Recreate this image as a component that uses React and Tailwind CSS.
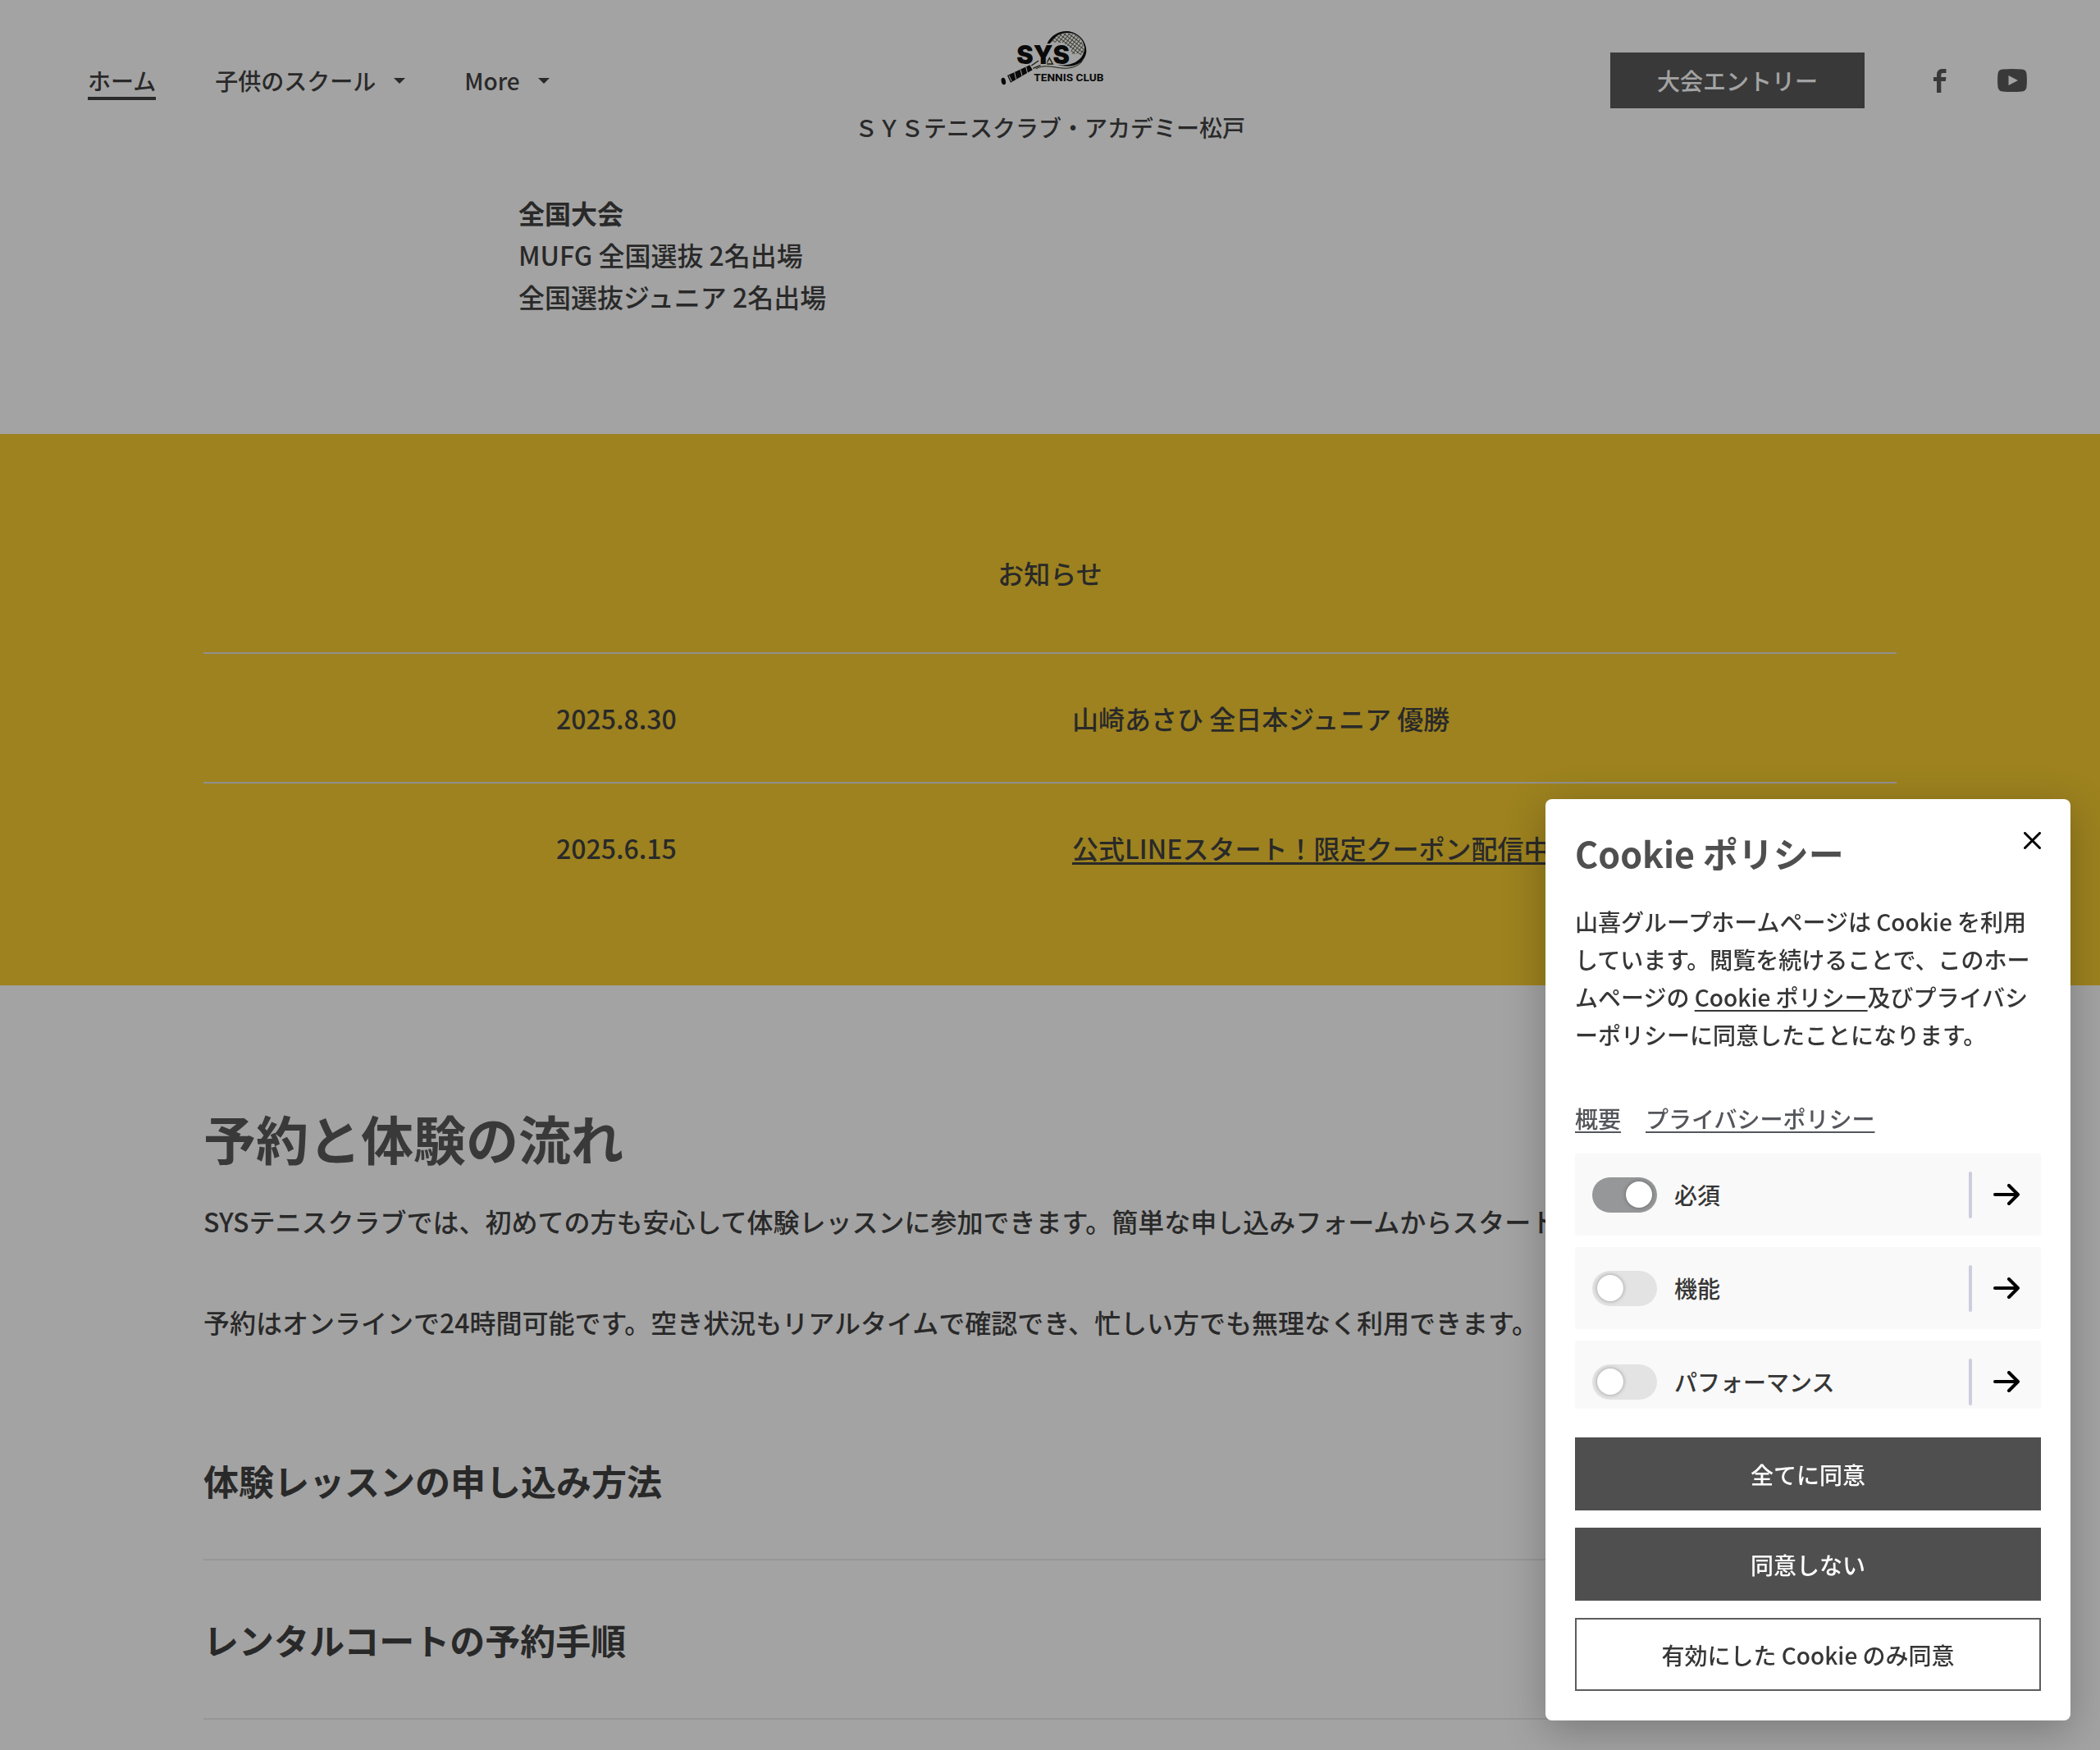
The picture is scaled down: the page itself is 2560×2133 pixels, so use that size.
import React, { useState } from 'react';

const NEWS = [
    { date: '2025.8.30', title: '山崎あさひ 全日本ジュニア 優勝' },
    { date: '2025.6.15', title: '公式LINEスタート！限定クーポン配信中', href: '#line' },
];

const FLOW = ['体験レッスンの申し込み方法', 'レンタルコートの予約手順'];

const COOKIE_TYPES = [
    { id: 'essential', label: '必須' },
    { id: 'functional', label: '機能' },
    { id: 'performance', label: 'パフォーマンス' },
];

const Logo = () => (
    <svg width="160" height="80" viewBox="0 0 480 240" role="img" aria-label="SYS TENNIS CLUB">
        <defs>
            <pattern id="strings" width="11" height="11" patternUnits="userSpaceOnUse" patternTransform="rotate(38)">
                <path d="M0 0H11M0 0V11" stroke="#23240a" strokeWidth="4" fill="none" />
            </pattern>
        </defs>
        <path d="M236 64C254 38 284 28 314 32C346 38 366 62 364 100L356 112L340 106L320 108L316 88L302 76L288 66Z" fill="url(#strings)" />
        <path d="M229 70C244 38 274 22 304 24C346 28 374 62 373 98C370 132 342 152 306 152C290 152 280 150 268 148C290 148 308 148 322 142C350 132 366 110 366 84C362 52 338 32 306 30C278 29 254 44 240 70Z" fill="#000" />
        <path d="M188 162C214 146 246 154 274 158C312 164 342 154 358 134" fill="none" stroke="#1c1d05" strokeWidth="3" />
        <path d="M172 150L198 132M178 160L206 148M226 144L238 122L250 144Z" fill="none" stroke="#1c1d05" strokeWidth="4" />
        <path d="M84 186L166 148L176 166L96 212Z" fill="#000" />
        <path d="M90 186L100 208M110 174L116 200M132 164L138 188M152 154L158 178" stroke="#fff" strokeWidth="3" />
        <ellipse cx="70" cy="207" rx="8" ry="13" fill="#000" transform="rotate(-12 70 207)" />
        <text x="118" y="145" fontSize="92" fontWeight="900" fontFamily="Inter, sans-serif" stroke="#fff" strokeWidth="8" paintOrder="stroke">SYS</text>
        <text x="181" y="207" fontSize="41" fontWeight="700" fontFamily="Roboto, sans-serif">TENNIS CLUB</text>
    </svg>
);

const Caret = () => (
    <svg width="14" height="7" viewBox="0 0 14 7" fill="currentColor" aria-hidden="true">
        <path d="M0 0H14L7 7Z" />
    </svg>
);

const Header = () => (
    <header className="grid grid-cols-[1fr_auto_1fr] items-center px-[107px] text-[28px] leading-[42px]">
        <nav className="flex items-center gap-[72px]">
            <a href="#home" className="border-b-4 border-[#343434] pt-1 leading-[40px]">ホーム</a>
            <button type="button" aria-haspopup="menu" className="flex items-center gap-[22px]">
                子供のスクール
                <Caret />
            </button>
            <button type="button" aria-haspopup="menu" className="flex items-center gap-[22px]">
                More
                <Caret />
            </button>
        </nav>

        <a href="#home" className="flex flex-col items-center gap-[24px] pt-[30px] pb-[20px]">
            <Logo />
            <span>ＳＹＳテニスクラブ・アカデミー松戸</span>
        </a>

        <div className="flex items-center justify-end text-[#4f4f4f]">
            <a href="#entry" className="bg-[#4f4f4f] px-[57px] py-[13px] text-white">大会エントリー</a>
            <a href="#facebook" aria-label="Facebook" className="ml-[84px]">
                <svg width="16" height="29" viewBox="0 0 16 29" fill="currentColor">
                    <path d="M4 29V15H0V10H4V7.500C4 2.500 6.500 0 11 0H15.500V5H12C10 5 9.300 5.800 9.300 7.500V10H15.500L14.800 15H9.300V29Z" />
                </svg>
            </a>
            <a href="#youtube" aria-label="YouTube" className="ml-[62px] -mr-[18px]">
                <svg width="36" height="28" viewBox="0 0 36 28">
                    <path d="M6 .6Q18-.4 30 .6Q35 1 35.500 6Q36.300 14 35.500 22Q35 27 30 27.400Q18 28.400 6 27.400Q1 27 .5 22Q-.3 14 .5 6Q1 1 6 .6Z" fill="currentColor" />
                    <path d="M13.500 8V20L25 14Z" fill="#fff" />
                </svg>
            </a>
        </div>
    </header>
);

const CookieDialog = ({ onClose }) => {
    const [enabled, setEnabled] = useState({ essential: true, functional: false, performance: false });

    const toggle = (id) => {
        if (id === 'essential') return;
        setEnabled({ ...enabled, [id]: !enabled[id] });
    };

    return (
        <section
            role="dialog"
            aria-labelledby="cookie-title"
            className="fixed right-9 bottom-9 w-[640px] rounded-lg bg-white p-9 text-[28px] leading-[46px] text-[#363636] shadow-[0_12px_50px_rgba(0,0,0,0.25)]"
        >
            <div className="flex items-start justify-between">
                <h2 id="cookie-title" className="text-[43px] leading-[58px] font-bold text-[#4f4f4f]">Cookie ポリシー</h2>
                <button type="button" aria-label="閉じる" onClick={onClose} className="mt-1 text-black">
                    <svg width="21" height="21" viewBox="0 0 21 21" fill="none" stroke="currentColor" strokeWidth="3" strokeLinecap="round">
                        <path d="M1.500 1.500L19.500 19.500M19.500 1.500L1.500 19.500" />
                    </svg>
                </button>
            </div>

            <p className="mt-8">
                山喜グループホームページは Cookie を利用しています。閲覧を続けることで、このホームページの <a href="#cookie" className="underline underline-offset-4">Cookie ポリシー</a>及びプライバシーポリシーに同意したことになります。
            </p>

            <div className="mt-14 flex gap-[30px] text-[#55565b]">
                <a href="#overview" className="underline underline-offset-4">概要</a>
                <a href="#privacy" className="underline underline-offset-4">プライバシーポリシー</a>
            </div>

            <ul className="mt-5 flex h-[311px] flex-col gap-[14px] overflow-y-auto [scrollbar-width:none]">
                {COOKIE_TYPES.map(({ id, label }) => (
                    <li key={id} className="flex h-[100px] shrink-0 items-center rounded-sm bg-[#f9f9f9] pr-[26px] pl-[21px]">
                        <input
                            id={id}
                            type="checkbox"
                            checked={enabled[id]}
                            onChange={() => toggle(id)}
                            className="flex h-[43px] w-[79px] appearance-none items-center rounded-full bg-[#e3e3e3] px-[6px] before:size-8 before:rounded-full before:bg-white before:shadow-[0_0_5px_rgba(0,0,0,0.35)] checked:justify-end checked:bg-[#969798]"
                        />
                        <label htmlFor={id} className="ml-[21px] grow">{label}</label>
                        <span className="h-[57px] w-1 rounded-full bg-[#cccddd]" />
                        <button type="button" aria-label={`${label}の詳細`} className="ml-[26px] text-black">
                            <svg width="32" height="26" viewBox="0 0 32 26" fill="none" stroke="currentColor" strokeWidth="4" strokeLinecap="round" strokeLinejoin="round">
                                <path d="M2 13H30M19 2L30 13L19 24" />
                            </svg>
                        </button>
                    </li>
                ))}
            </ul>

            <div className="mt-[35px] flex flex-col gap-[21px]">
                <button type="button" onClick={onClose} className="h-[89px] bg-[#4f4f4f] text-white">全てに同意</button>
                <button type="button" onClick={onClose} className="h-[89px] bg-[#4f4f4f] text-white">同意しない</button>
                <button type="button" onClick={onClose} className="h-[89px] border-2 border-[#5c5c5c]">有効にした Cookie のみ同意</button>
            </div>
        </section>
    );
};

const App = () => {
    const [showCookies, setShowCookies] = useState(true);

    return (
        <div lang="ja" className="min-h-screen bg-white font-['Noto_Sans_CJK_JP',sans-serif] text-[32px] leading-[51px] font-medium text-[#343434]">
            <Header />

            <main>
                <section className="mx-auto max-w-[1296px] pt-[38px] pb-[142px]">
                    <p className="font-bold">全国大会</p>
                    <p>MUFG 全国選抜 2名出場</p>
                    <p>全国選抜ジュニア 2名出場</p>
                </section>

                <section className="bg-[#f5c824] pt-[144px] pb-[90px]">
                    <h2 className="text-center">お知らせ</h2>
                    <ul className="mx-auto mt-[71px] max-w-[2064px]">
                        {NEWS.map(({ date, title, href }) => (
                            <li key={date} className="grid h-[158px] grid-cols-[629px_1fr] items-center border-t-2 border-[#e3e0da] pl-[430px]">
                                <time>{date}</time>
                                {href ? <a href={href} className="justify-self-start underline underline-offset-4">{title}</a> : <span>{title}</span>}
                            </li>
                        ))}
                    </ul>
                </section>

                <section className="mx-auto max-w-[2064px] pt-[140px]">
                    <h2 className="text-[64px] leading-[90px] font-bold text-[#4f4f4f]">予約と体験の流れ</h2>
                    <p className="mt-8">SYSテニスクラブでは、初めての方も安心して体験レッスンに参加できます。簡単な申し込みフォームからスタート</p>
                    <p className="mt-[72px]">予約はオンラインで24時間可能です。空き状況もリアルタイムで確認でき、忙しい方でも無理なく利用できます。</p>
                    <div className="mt-[71px]">
                        {FLOW.map((title) => (
                            <h3 key={title} className="flex h-[194px] items-center border-b-2 border-[#e9e9ec] text-[43px] font-bold">
                                {title}
                            </h3>
                        ))}
                    </div>
                </section>
            </main>

            {showCookies && (
                <>
                    <div className="fixed inset-0 bg-[#1a1a1a]/40" />
                    <CookieDialog onClose={() => setShowCookies(false)} />
                </>
            )}
        </div>
    );
};

export default App;
